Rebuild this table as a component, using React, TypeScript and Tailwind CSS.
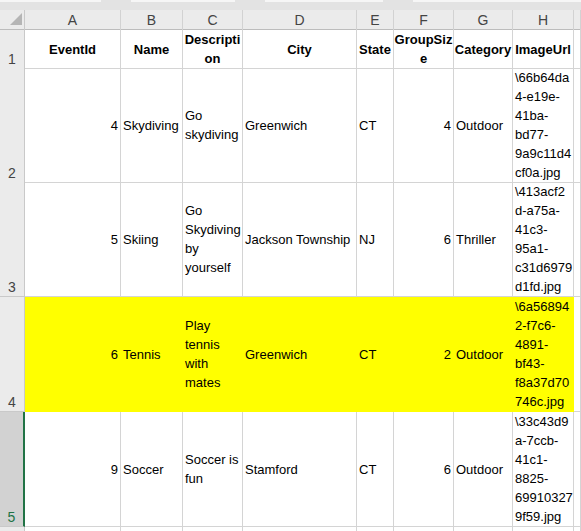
import React from 'react';

type Row = {
  num: number;
  height: string;
  yellow?: boolean;
  selected?: boolean;
  cells: string[];
};

const rows: Row[] = [
  {
    num: 2,
    height: 'h-[114px]',
    cells: ['4', 'Skydiving', 'Go\nskydiving', 'Greenwich', 'CT', '4', 'Outdoor', '\\66b64da\n4-e19e-\n41ba-\nbd77-\n9a9c11d4\ncf0a.jpg'],
  },
  {
    num: 3,
    height: 'h-[115px]',
    cells: ['5', 'Skiing', 'Go\nSkydiving\nby\nyourself', 'Jackson Township', 'NJ', '6', 'Thriller', '\\413acf2\nd-a75a-\n41c3-\n95a1-\nc31d6979\nd1fd.jpg'],
  },
  {
    num: 4,
    height: 'h-[115px]',
    yellow: true,
    cells: ['6', 'Tennis', 'Play\ntennis\nwith\nmates', 'Greenwich', 'CT', '2', 'Outdoor', '\\6a56894\n2-f7c6-\n4891-\nbf43-\nf8a37d70\n746c.jpg'],
  },
  {
    num: 5,
    height: 'h-[115px]',
    selected: true,
    cells: ['9', 'Soccer', 'Soccer is\nfun', 'Stamford', 'CT', '6', 'Outdoor', '\\33c43d9\na-7ccb-\n41c1-\n8825-\n69910327\n9f59.jpg'],
  },
];

const letters = ['A', 'B', 'C', 'D', 'E', 'F', 'G', 'H', ''];
const headers = ['EventId', 'Name', 'Descripti\non', 'City', 'State', 'GroupSiz\ne', 'Category', 'ImageUrl'];
// numeric columns are right aligned
const numeric = [true, false, false, false, false, true, false, false];

const grid = 'grid grid-cols-[25px_96px_62px_60px_114px_37px_60px_59px_61px_1fr]';

const App: React.FC = () => {
  return (
    <div className="w-[581px] h-[531px] overflow-hidden bg-white text-[13px] text-black" style={{ fontFamily: '"Liberation Sans", Arial, sans-serif' }}>
      {/* Bottom edge of the formula bar */}
      <div className="h-[10px] bg-[#e3e3e3] flex gap-[30px]">
        <div className="w-[101px] h-[2px] bg-[#f6f6f6]"></div>
        <div className="w-[104px] h-[2px] bg-[#f6f6f6]"></div>
        <div className="w-[118px] h-[2px] bg-[#f6f6f6]"></div>
        <div className="flex-1 h-[2px] bg-[#f6f6f6]"></div>
      </div>

      {/* Column letters */}
      <div className={`${grid} h-[20px] bg-[#ebebeb] text-[#444] text-[14px] border-b border-[#bcbcbc]`}>
        <div className="relative border-r border-[#c9c9c9]">
          <svg className="absolute left-[10px] top-[3px]" width="12" height="12" viewBox="0 0 12 12">
            <polygon points="12,0 12,12 0,12" fill="#b5b5b5" />
          </svg>
        </div>
        {letters.map((l, i) => (
          <div key={i} className="flex items-center justify-center border-r border-[#d2d2d2]">
            {l}
          </div>
        ))}
      </div>

      {/* Row 1 - headings */}
      <div className={`${grid} h-[38px]`}>
        <div className="flex items-end justify-center bg-[#ebebeb] text-[#444] text-[14px] border-r border-b border-[#c9c9c9] leading-[16px] pb-[1px]">1</div>
        {headers.map((h, i) => (
          <div key={i} className="flex items-center justify-center text-center font-bold whitespace-pre-line leading-[19px] border-r border-b border-[#d4d4d4]">
            {h}
          </div>
        ))}
        <div className="border-r border-b border-[#d4d4d4]"></div>
      </div>

      {rows.map((row) => (
        <div key={row.num} className={`${grid} ${row.height}`}>
          <div
            className={`flex items-end justify-center text-[14px] border-b border-[#c9c9c9] leading-[16px] pb-[1px] ${
              row.selected ? 'bg-[#d2d2d2] text-[#217346] border-r-2 border-r-[#217346]' : 'bg-[#ebebeb] text-[#444] border-r border-r-[#c9c9c9]'
            }`}
          >
            {row.num}
          </div>
          {row.cells.map((c, i) => (
            <div
              key={i}
              className={`flex items-center px-[2px] whitespace-pre-line leading-[19px] border-r border-b ${
                numeric[i] ? 'justify-end' : 'justify-start'
              } ${row.yellow ? 'bg-[#ffff00] border-[#ffff00]' : 'border-[#d4d4d4]'}`}
            >
              {c}
            </div>
          ))}
          <div className="border-r border-b border-[#d4d4d4]"></div>
        </div>
      ))}

      {/* Row 6 peeking in at the bottom */}
      <div className={`${grid} h-[20px]`}>
        <div className="bg-[#ebebeb] border-r border-[#c9c9c9]"></div>
        {letters.map((_, i) => (
          <div key={i} className="border-r border-[#d4d4d4]"></div>
        ))}
      </div>
    </div>
  );
};

export default App;
